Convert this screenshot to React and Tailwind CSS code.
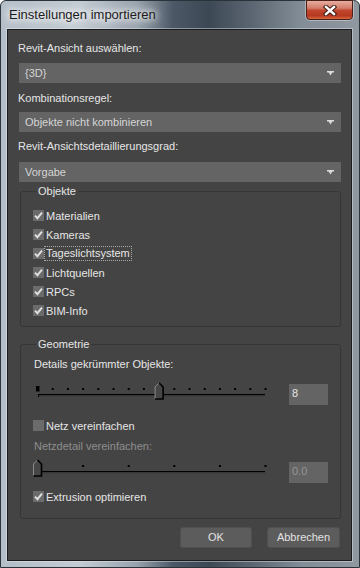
const ui = "font-['Liberation_Sans',Arial,sans-serif]"

function Check({ checked }) {
  return (
    <span className="w-[11px] h-[11px] bg-[#6b6b6b] flex items-center justify-center shrink-0">
      {checked && (
        <svg width="9" height="9" viewBox="0 0 9 9">
          <path d="M1 4.6 L3.4 7.2 L8 1.6" fill="none" stroke="#e0e0e0" strokeWidth="1.9" />
        </svg>
      )}
    </span>
  )
}

function CheckRow({ label, checked = true, focus = false, className = '' }) {
  return (
    <div className={`h-[19px] flex items-center gap-[1px] ${className}`}>
      <Check checked={checked} />
      <span
        className={
          focus
            ? 'px-[1px] -ml-[1px] leading-[13px] border border-dotted border-[#a8a8a8] text-[#e6e6e6]'
            : 'ml-[1px] text-[#e6e6e6]'
        }
      >
        {label}
      </span>
    </div>
  )
}

function Select({ value }) {
  return (
    <div className="ml-[1px] h-[20px] bg-[#646464] flex items-center pl-[6px] pr-[7px] text-[#d4d4d4]">
      <span className="flex-1">{value}</span>
      <svg width="7" height="5" viewBox="0 0 7 5">
        <path d="M0 0H7V1.5H5.3L3.5 4.5L1.7 1.5H0Z" fill="#dcdcdc" />
      </svg>
    </div>
  )
}

function Thumb({ x }) {
  return (
    <g transform={`translate(${x},0)`}>
      <path d="M-4 5 L0 1 L4 5 V17 H-4Z" fill="#464646" />
      <path d="M-4 17 V5 L0 1" fill="none" stroke="#8a8a8a" strokeWidth="1" />
      <path d="M0 1 L4 5 V17 H-4" fill="none" stroke="#000" strokeWidth="1.6" />
    </g>
  )
}

function Slider({ ticks, pos, big }) {
  const start = 4.5
  const end = 232.5
  const step = (end - start) / (ticks - 1)
  const thumbX = start + pos * step
  return (
    <svg width="236" height="20" viewBox="0 0 236 20" className="shrink-0">
      {Array.from({ length: ticks }).map((_, i) =>
        i === 0 && big ? (
          <rect key={i} x="3" y="4" width="3.5" height="5.5" fill="#000" />
        ) : (
          <rect key={i} x={start + i * step - 1} y="6" width="2" height="2" fill="#000" />
        )
      )}
      <rect x="5" y="12" width="227" height="1" fill="#000" />
      <rect x="5" y="13" width="227" height="1.5" fill="#383838" />
      <rect x="5" y="12" width="1" height="3" fill="#000" />
      <Thumb x={thumbX} />
    </svg>
  )
}

function NumBox({ value, disabled }) {
  return (
    <div
      className={`w-[39px] h-[21px] bg-[#646464] pl-[3px] pt-[3px] leading-[13px] ${
        disabled ? 'text-[#959595]' : 'text-[#e4e4e4]'
      }`}
    >
      {value}
    </div>
  )
}

function Group({ title, className = '', children }) {
  return (
    <fieldset className={`ml-[2px] border border-[#363636] rounded-[3px] ${className}`}>
      <legend className="ml-[3px] px-[2px] leading-[14px] text-[#e6e6e6]">{title}</legend>
      {children}
    </fieldset>
  )
}

function Button({ children, className = '' }) {
  return (
    <button
      className={`h-[21px] rounded-[3px] bg-[#5c5c5c] border border-[#505050] text-[#e2e2e2] leading-[13px] ${className}`}
    >
      {children}
    </button>
  )
}

export default function App() {
  return (
    <div
      className={`${ui} w-[360px] h-[568px] flex flex-col rounded-t-[6px] border border-[#2a323a] bg-[linear-gradient(90deg,#b4bec8_0%,#c3cbd3_22%,#98a3ae_38%,#4c5866_48%,#3c4854_58%,#5b6672_70%,#838d97_84%,#8f979f_100%)]`}
    >
      <div className="h-[28px] flex items-start shrink-0">
        <span className="pl-[8px] pt-[6px] text-[13px] leading-[16px] text-[#1c1c1c] [text-shadow:0_0_6px_#fff,0_0_10px_#fff,0_0_14px_#fff]">
          Einstellungen importieren
        </span>
        <div className="ml-auto mr-[6px] -mt-[1px] w-[47px] h-[20px] rounded-b-[4px] border border-[#4a2018] bg-[linear-gradient(180deg,#e6ada0_0%,#d27c68_40%,#c2462e_52%,#b6391f_82%,#d8683e_100%)] flex items-center justify-center shadow-[0_0_0_1px_rgba(255,255,255,0.35)]">
          <svg width="14" height="11" viewBox="0 0 14 11">
            <path d="M3 2 L11 9 M11 2 L3 9" stroke="#3a1a14" strokeWidth="4.4" strokeLinecap="square" />
            <path d="M3 2 L11 9 M11 2 L3 9" stroke="#fff" strokeWidth="2.4" strokeLinecap="square" />
          </svg>
        </div>
      </div>

      <div className="ml-[6px] mr-[7px] h-[532px] border border-[#1c1c1c] bg-[#444444] shadow-[0_0_0_1px_rgba(230,236,242,0.45)] px-[10px] text-[11px] leading-[14px] text-[#e6e6e6] flex flex-col">
        <div className="mt-[11px]">Revit-Ansicht auswählen:</div>
        <div className="mt-[8px]">
          <Select value="{3D}" />
        </div>
        <div className="mt-[8px]">Kombinationsregel:</div>
        <div className="mt-[7px]">
          <Select value="Objekte nicht kombinieren" />
        </div>
        <div className="mt-[7px]">Revit-Ansichtsdetaillierungsgrad:</div>
        <div className="mt-[9px]">
          <Select value="Vorgabe" />
        </div>

        <Group title="Objekte" className="mt-[2px] pl-[12px] pb-[6px]">
          <div className="mt-[8px]">
            <CheckRow label="Materialien" />
            <CheckRow label="Kameras" />
            <CheckRow label="Tageslichtsystem" focus />
            <CheckRow label="Lichtquellen" />
            <CheckRow label="RPCs" />
            <CheckRow label="BIM-Info" />
          </div>
        </Group>

        <Group title="Geometrie" className="mt-[10px] pl-[12px] pb-[12px]">
          <div className="mt-[6px] ml-[1px]">Details gekrümmter Objekte:</div>
          <div className="mt-[11px] flex items-start">
            <Slider ticks={16} pos={8} big />
            <div className="ml-[20px] mt-[2px]">
              <NumBox value="8" />
            </div>
          </div>
          <CheckRow label="Netz vereinfachen" checked={false} className="mt-[11px]" />
          <div className="mt-[4px] ml-[1px] text-[#8e8e8e]">Netzdetail vereinfachen:</div>
          <div className="mt-[6px] flex items-start">
            <Slider ticks={6} pos={0} />
            <div className="ml-[20px] mt-[3px]">
              <NumBox value="0.0" disabled />
            </div>
          </div>
          <CheckRow label="Extrusion optimieren" className="mt-[4px]" />
        </Group>

        <div className="mt-[8px] mr-[1px] flex justify-end gap-[15px]">
          <Button className="w-[72px]">OK</Button>
          <Button className="w-[73px]">Abbrechen</Button>
        </div>
      </div>
    </div>
  )
}
